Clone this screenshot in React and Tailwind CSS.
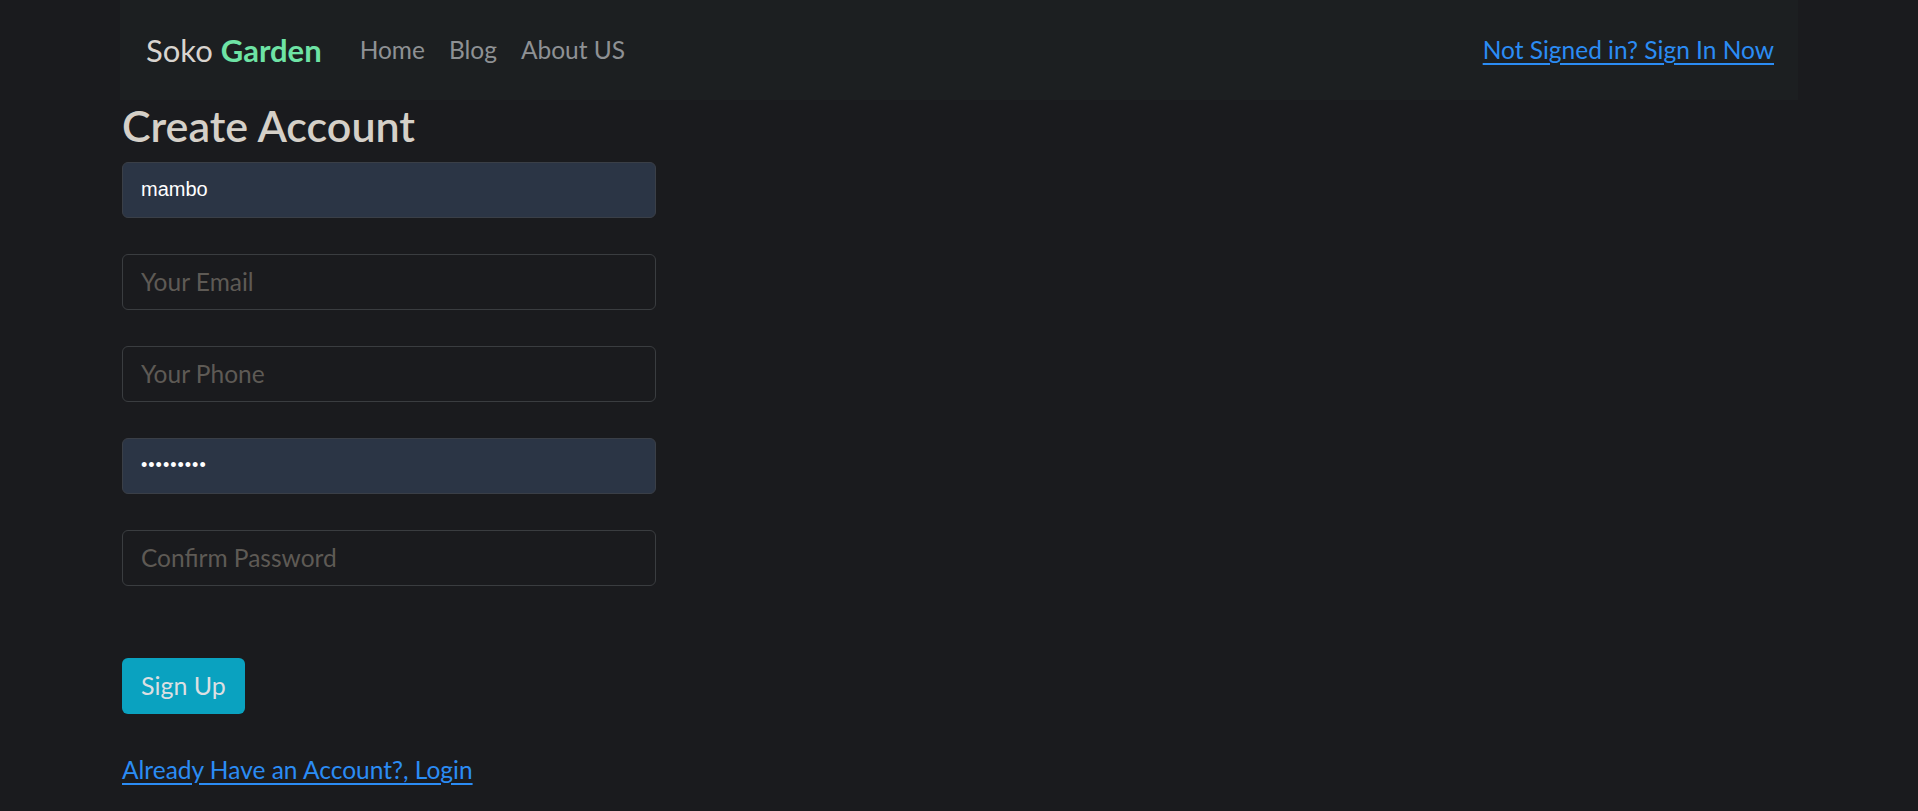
export default function App() {
  return (
    <div className="min-h-screen bg-[#1a1b1e] text-[#d5d0c8] font-['Lato','Open_Sans',sans-serif]">
      <div className="w-[1710px] mx-auto px-[16px]">
        {/* Navbar */}
        <nav className="h-[100px] bg-[#1c1f21] flex items-center justify-between pl-[26px] pr-6">
          <div className="flex items-center">
            <a className="text-[31px] text-[#d8d4cf] mr-[26px]">
              Soko <b className="text-[#6ee3a5] font-bold">Garden</b>
            </a>
            <a className="text-[24.5px] text-[#8e9194] px-3">Home</a>
            <a className="text-[24.5px] text-[#8e9194] px-3">Blog</a>
            <a className="text-[24.5px] text-[#8e9194] px-3">About US</a>
          </div>
          <a className="text-[24.5px] text-[#2b8cf4] underline underline-offset-4">
            Not Signed in? Sign In Now
          </a>
        </nav>

        {/* Form */}
        <div className="w-[536px] pl-[2px]">
          <h1 className="text-[43px] leading-[1.2] font-semibold mb-[10px] text-[#d5d0c8]">
            Create Account
          </h1>
          <form className="flex flex-col gap-9">
            <input
              defaultValue="mambo"
              className="h-[56px] w-full rounded-md border border-[#3a3f47] bg-[#2b3545] px-[18px] text-[20px] text-white outline-none font-['Liberation_Sans',Arial,sans-serif]"
            />
            <input
              placeholder="Your Email"
              className="h-[56px] w-full rounded-md border border-[#3a3d40] bg-transparent px-[18px] text-[24.5px] text-[#d5d0c8] placeholder:text-[#5e5a55] outline-none"
            />
            <input
              placeholder="Your Phone"
              className="h-[56px] w-full rounded-md border border-[#3a3d40] bg-transparent px-[18px] text-[24.5px] text-[#d5d0c8] placeholder:text-[#5e5a55] outline-none"
            />
            <input
              type="password"
              defaultValue="mambo1234"
              className="h-[56px] w-full rounded-md border border-[#3a3f47] bg-[#2b3545] px-[18px] text-[18px] tracking-[1px] text-white outline-none font-['Liberation_Sans',Arial,sans-serif]"
            />
            <input
              placeholder="Confirm Password"
              className="h-[56px] w-full rounded-md border border-[#3a3d40] bg-transparent px-[18px] text-[24.5px] text-[#d5d0c8] placeholder:text-[#5e5a55] outline-none"
            />
            <div className="pt-9">
              <button
                type="button"
                className="h-[56px] px-[19px] rounded-md bg-[#0aa2c0] text-[25px] text-[#dcdfe2]"
              >
                Sign Up
              </button>
            </div>
          </form>
          <div className="mt-[38px]">
            <a className="text-[24.5px] leading-9 text-[#2b8cf4] underline underline-offset-4">
              Already Have an Account?, Login
            </a>
          </div>
        </div>
      </div>
    </div>
  );
}
